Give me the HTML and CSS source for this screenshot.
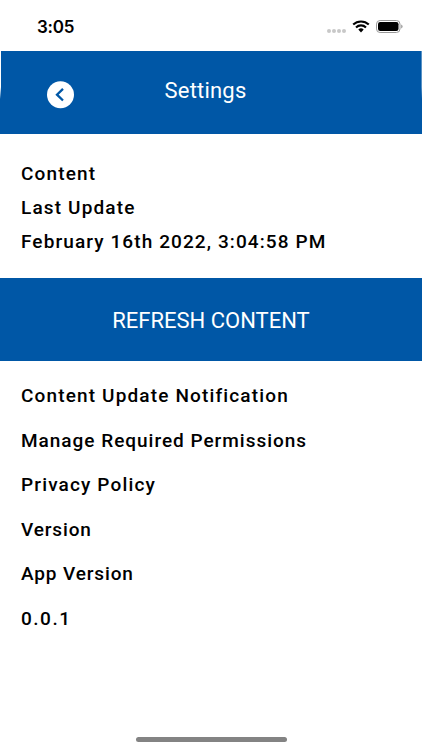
FILE: index.html
```
<!DOCTYPE html>
<html lang="en">
<head>
    <meta charset="UTF-8">
    <meta name="viewport" content="width=device-width, initial-scale=1.0">
    <title>Settings</title>
    <link rel="stylesheet" href="styles.css">
</head>
<body>
    <div class="status-bar">
        <span class="time">3:05</span>
        <div class="status-icons">
            <div class="cellular"><i></i><i></i><i></i><i></i></div>
            <svg class="wifi" width="18" height="13" viewBox="0 0 18 13">
                <path d="M1.2 4.6a11.2 11.2 0 0 1 15.6 0M4 7.4a7.2 7.2 0 0 1 10 0" fill="none" stroke="#000" stroke-width="2.1"/>
                <path d="M6.3 9.6a4 4 0 0 1 5.4 0L9 12.4z"/>
            </svg>
            <svg class="battery" width="27" height="13" viewBox="0 0 27 13">
                <rect x="0.5" y="0.5" width="23.5" height="12" rx="3.6" fill="none" stroke="#999"/>
                <rect x="2" y="2" width="20.5" height="9" rx="2.2"/>
                <path d="M25.2 4.4a2.3 2.3 0 0 1 0 4.2z" fill="#999"/>
            </svg>
        </div>
    </div>

    <header>
        <button class="back" aria-label="Back">
            <svg width="28" height="28" viewBox="0 0 28 28">
                <circle cx="14.5" cy="13.7" r="13.5" fill="#fff"/>
                <path d="M17 7.9l-6 5.8 6 5.8" fill="none" stroke="#0057a6" stroke-width="2.3"/>
            </svg>
        </button>
        <h1>Settings</h1>
    </header>

    <main>
        <section class="content">
            <p>Content</p>
            <p>Last Update</p>
            <p class="date">February 16th 2022, 3:04:58 PM</p>
        </section>

        <button class="refresh"><span>REFRESH CONTENT</span></button>

        <ul class="options">
            <li class="notification">Content Update Notification</li>
            <li class="permissions">Manage Required Permissions</li>
            <li class="privacy">Privacy Policy</li>
            <li class="version">Version</li>
            <li class="version">App Version</li>
            <li class="number">0.0.1</li>
        </ul>
    </main>

    <div class="home-indicator"></div>
</body>
</html>
```
FILE: styles.css
```
* {
    box-sizing: border-box;
}

body {
    font-family: Roboto, "Liberation Sans", sans-serif;
    background-color: #fff;
    color: #000;
    margin: 0;
    height: 750px;
    display: flex;
    flex-direction: column;
    overflow: hidden;
}

.status-bar {
    height: 51px;
    padding: 3px 19px 0 37px;
    display: flex;
    justify-content: space-between;
    align-items: center;
}

.time {
    font-family: Inter, sans-serif;
    font-size: 17px;
    font-weight: 600;
    letter-spacing: -0.2px;
}

.status-icons {
    display: flex;
    align-items: center;
    gap: 6px;
    padding-bottom: 1px;
}

.cellular {
    display: flex;
    gap: 1px;
    padding-top: 9px;
}

.cellular i {
    width: 4px;
    height: 4px;
    border-radius: 50%;
    background-color: #c8c8c8;
}

header {
    position: relative;
    height: 83px;
    background-color: #0057a6;
    color: #fff;
    display: grid;
    grid-template-columns: 107px 1fr 118px;
    align-items: center;
}

/* edges of the screen underneath */
header::before,
header::after {
    content: "";
    position: absolute;
    top: 0;
    left: 0;
    width: 1px;
    height: 48px;
    background: linear-gradient(#fff 75%, #0057a6);
}

header::after {
    left: auto;
    right: 0;
    opacity: 0.35;
}

.back {
    border: 0;
    background: none;
    padding: 4px 0 0 46px;
    height: 32px;
    display: flex;
}

h1 {
    margin: 0 0 4px;
    font-size: 22px;
    font-weight: 400;
    letter-spacing: 0.2px;
    text-align: center;
}

.content {
    height: 144px;
    padding: 23px 21px 0;
}

.content p {
    margin: 0;
    height: 33.6px;
    line-height: 34px;
}

.content p,
.options li {
    font-size: 19px;
    font-weight: 500;
    letter-spacing: 1.15px;
    white-space: nowrap;
}

.content .date {
    letter-spacing: 1.1px;
    line-height: 35px;
}

.refresh {
    display: flex;
    align-items: center;
    justify-content: center;
    width: 100%;
    height: 83px;
    border: 0;
    padding: 2px 0 0;
    background-color: #0057a6;
    color: #fff;
    font-family: inherit;
    font-size: 22px;
}

.options {
    list-style: none;
    margin: 0;
    padding: 13px 21px 0;
}

.options li {
    height: 44.5px;
    line-height: 44px;
}

.options .permissions {
    letter-spacing: 0.98px;
    line-height: 43px;
}

.options .version {
    letter-spacing: 0.87px;
}

.options .number {
    letter-spacing: 1.5px;
    line-height: 43px;
}

.home-indicator {
    width: 151px;
    height: 5px;
    border-radius: 3px;
    background-color: #838383;
    margin: auto auto 8px;
}
```
